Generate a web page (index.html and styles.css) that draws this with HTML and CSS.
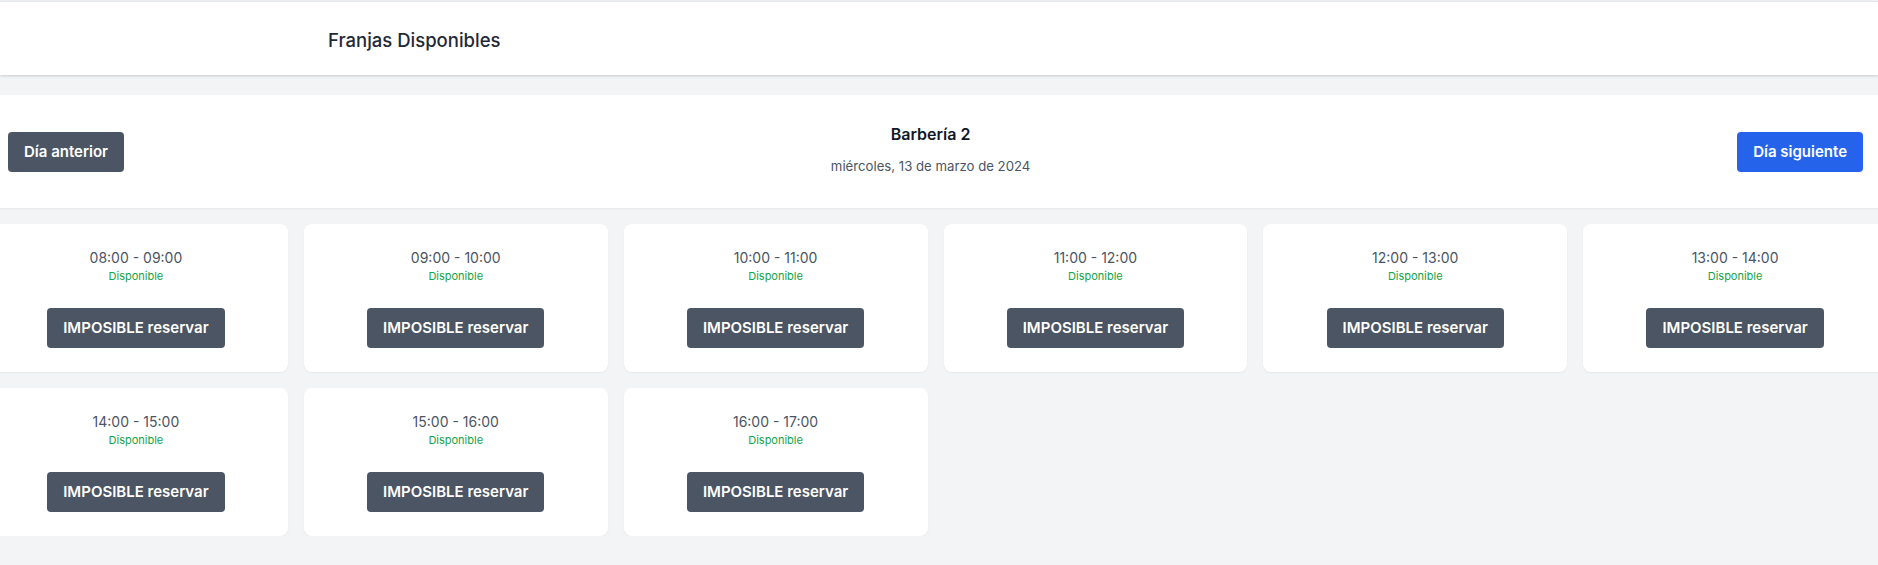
FILE: index.html
```html
<!DOCTYPE html>
<html lang="es">
<head>
<meta charset="utf-8">
<title>Franjas Disponibles</title>
<link rel="stylesheet" href="styles.css">
</head>
<body>
<header class="topbar">
  <div class="topbar-inner">
    <h1 class="page-title">Franjas Disponibles</h1>
  </div>
</header>
<main class="content">
  <section class="day-nav">
    <button class="btn btn-gray">Día anterior</button>
    <div class="day-info">
      <h2 class="shop-name">Barbería 2</h2>
      <p class="day-date">miércoles, 13 de marzo de 2024</p>
    </div>
    <button class="btn btn-blue">Día siguiente</button>
  </section>
  <div class="slots">
    <div class="slot"><p class="slot-time">08:00 - 09:00</p><p class="slot-status">Disponible</p><button class="btn btn-gray">IMPOSIBLE reservar</button></div>
    <div class="slot"><p class="slot-time">09:00 - 10:00</p><p class="slot-status">Disponible</p><button class="btn btn-gray">IMPOSIBLE reservar</button></div>
    <div class="slot"><p class="slot-time">10:00 - 11:00</p><p class="slot-status">Disponible</p><button class="btn btn-gray">IMPOSIBLE reservar</button></div>
    <div class="slot"><p class="slot-time">11:00 - 12:00</p><p class="slot-status">Disponible</p><button class="btn btn-gray">IMPOSIBLE reservar</button></div>
    <div class="slot"><p class="slot-time">12:00 - 13:00</p><p class="slot-status">Disponible</p><button class="btn btn-gray">IMPOSIBLE reservar</button></div>
    <div class="slot"><p class="slot-time">13:00 - 14:00</p><p class="slot-status">Disponible</p><button class="btn btn-gray">IMPOSIBLE reservar</button></div>
    <div class="slot"><p class="slot-time">14:00 - 15:00</p><p class="slot-status">Disponible</p><button class="btn btn-gray">IMPOSIBLE reservar</button></div>
    <div class="slot"><p class="slot-time">15:00 - 16:00</p><p class="slot-status">Disponible</p><button class="btn btn-gray">IMPOSIBLE reservar</button></div>
    <div class="slot"><p class="slot-time">16:00 - 17:00</p><p class="slot-status">Disponible</p><button class="btn btn-gray">IMPOSIBLE reservar</button></div>
  </div>
</main>
</body>
</html>
```

FILE: styles.css
```css
html, body {
  margin: 0;
  padding: 0;
  overflow-x: hidden;
}
body {
  background: #f3f4f6;
  font-family: "Inter", "Noto Sans", sans-serif;
  color: #111827;
  padding-top: 1px;
}
p, h1, h2 { margin: 0; }

.topbar {
  background: #ffffff;
  border-top: 1px solid #e5e7eb;
  box-shadow: 0 1px 3px rgba(0, 0, 0, 0.12), 0 1px 2px rgba(0, 0, 0, 0.06);
}
.topbar-inner {
  box-sizing: border-box;
  max-width: 1280px;
  margin: 0 auto;
  padding: 0 29px;
  height: 73px;
  display: flex;
  align-items: center;
}
.page-title {
  font-size: 18.5px;
  font-weight: 500;
  color: #1f2937;
  line-height: 24px;
  margin-top: 3px;
}

.content {
  width: 1903px;
  margin-left: -16px;
  padding-top: 20px;
}

.day-nav {
  background: #ffffff;
  height: 113px;
  box-sizing: border-box;
  padding: 0 24px;
  display: flex;
  align-items: center;
  justify-content: space-between;
  box-shadow: 0 1px 2px rgba(0, 0, 0, 0.06);
}
.day-info {
  text-align: center;
  padding-bottom: 6px;
}
.shop-name {
  font-size: 16px;
  font-weight: 600;
  line-height: 24px;
  color: #111827;
}
.day-date {
  margin-top: 10px;
  font-size: 13.2px;
  line-height: 20px;
  color: #4b5563;
}

.btn {
  font-family: inherit;
  font-size: 15px;
  font-weight: 600;
  line-height: 24px;
  color: #ffffff;
  border: none;
  border-radius: 4px;
  padding: 8px 16px;
  cursor: pointer;
}
.btn-gray { background: #4b5563; }
.btn-blue { background: #2563eb; }

.slots {
  margin-top: 16px;
  display: grid;
  grid-template-columns: repeat(6, 1fr);
  gap: 16px;
}
.slot {
  background: #ffffff;
  border-radius: 8px;
  box-shadow: 0 1px 2px rgba(0, 0, 0, 0.05);
  padding: 24px;
  display: flex;
  flex-direction: column;
  align-items: center;
}
.slot-time {
  font-size: 14px;
  line-height: 20px;
  color: #4b5563;
}
.slot-status {
  font-size: 11px;
  line-height: 16px;
  color: #16a34a;
}
.slot .btn {
  margin-top: 24px;
}
```
